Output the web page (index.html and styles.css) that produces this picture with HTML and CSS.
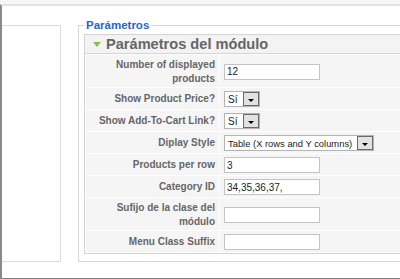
FILE: index.html
```html
<!DOCTYPE html>
<html lang="es">
  <head>
    <meta charset="UTF-8" />
    <meta name="viewport" content="width=device-width, initial-scale=1.0" />
    <title>Parámetros del módulo</title>
    <link rel="stylesheet" href="styles.css">
  </head>
  <body>
    <div class="topbar"></div>
    <div class="page">
      <div class="side"></div>
      <fieldset class="params">
        <legend>Parámetros</legend>
        <div class="pane">
          <h3 class="pane-title"><span class="arrow"></span>Parámetros del módulo</h3>
          <table class="paramlist">
            <tr>
              <td class="key">Number of displayed products</td>
              <td class="value"><input type="text" value="12" /></td>
            </tr>
            <tr>
              <td class="key">Show Product Price?</td>
              <td class="value">
                <span class="select"><span class="select-text">Sí</span><span class="select-btn"></span></span>
              </td>
            </tr>
            <tr>
              <td class="key">Show Add-To-Cart Link?</td>
              <td class="value">
                <span class="select"><span class="select-text">Sí</span><span class="select-btn"></span></span>
              </td>
            </tr>
            <tr>
              <td class="key">Diplay Style</td>
              <td class="value">
                <span class="select wide"><span class="select-text">Table (X rows and Y columns)</span><span class="select-btn"></span></span>
              </td>
            </tr>
            <tr>
              <td class="key">Products per row</td>
              <td class="value"><input type="text" value="3" /></td>
            </tr>
            <tr>
              <td class="key">Category ID</td>
              <td class="value"><input type="text" value="34,35,36,37," /></td>
            </tr>
            <tr>
              <td class="key">Sufijo de la clase del módulo</td>
              <td class="value"><input type="text" value="" /></td>
            </tr>
            <tr>
              <td class="key">Menu Class Suffix</td>
              <td class="value"><input type="text" value="" /></td>
            </tr>
          </table>
        </div>
      </fieldset>
    </div>
  </body>
</html>
```

FILE: styles.css
```css
* {
  box-sizing: border-box;
}
html,
body {
  margin: 0;
  padding: 0;
  overflow: hidden;
}
body {
  background: #fff;
  font-family: "Liberation Sans", Arial, sans-serif;
  width: 400px;
}
.topbar {
  height: 4px;
  background: #f6f6f6;
}
.page {
  display: flex;
  width: 440px;
  border-top: 2px solid #e2e2e2;
  border-left: 2px solid #8a8a8a;
  border-bottom: 2px solid #7e7e7e;
  padding: 12px 0 16px 0;
}
.side {
  width: 59px;
  margin-top: 7px;
  margin-right: 17px;
  border: 1px solid #dcdcdc;
  border-left: 0;
}
.params {
  flex: 1;
  margin: 0;
  padding: 1px 5px 7px 5px;
  border: 1px solid #d6d6d6;
  min-width: 0;
}
.params legend {
  padding: 0 2px;
  font-size: 11.5px;
  line-height: 15px;
  font-weight: bold;
  color: #1f66d4;
}
.pane {
  border: 1px solid #d4d4d4;
  background: #fff;
}
.pane-title {
  margin: 0;
  height: 19px;
  padding-left: 8px;
  display: flex;
  align-items: center;
  background: #f3f3f3;
  border-bottom: 1px solid #d4d4d4;
  font-size: 14.6px;
  line-height: 18px;
  color: #666;
}
.arrow {
  width: 0;
  height: 0;
  border-left: 4px solid transparent;
  border-right: 4px solid transparent;
  border-top: 5px solid #86bd4c;
  margin-right: 5px;
}
.paramlist {
  width: 100%;
  border-spacing: 1px;
}
.paramlist td {
  background: #f5f5f5;
  padding: 3px 4px 2px 4px;
  font-size: 10px;
  vertical-align: middle;
}
.paramlist .key {
  width: 133px;
  text-align: right;
  font-weight: bold;
  color: #666;
  line-height: 13.5px;
}
.paramlist input {
  display: block;
  width: 96px;
  height: 16px;
  margin: 0;
  padding: 0 2px;
  border: 1px solid #c4c4c4;
  background: #fff;
  font-family: "Liberation Sans", Arial, sans-serif;
  font-size: 10px;
  color: #222;
  outline: 0;
}
.select {
  display: flex;
  align-items: center;
  width: 36px;
  height: 16px;
  border: 1px solid #b4b4b4;
  background: #fff;
  color: #222;
}
.select.wide {
  width: 150px;
  font-size: 9.4px;
}
.select-text {
  flex: 1;
  padding-left: 3px;
  white-space: nowrap;
  overflow: hidden;
}
.select-btn {
  flex: none;
  width: 16px;
  height: 14px;
  border: 1px solid #6a6a6a;
  background: #e2e2e2;
  display: flex;
  align-items: flex-end;
  justify-content: center;
  padding-bottom: 3px;
}
.select-btn::after {
  content: "";
  border-left: 3px solid transparent;
  border-right: 3px solid transparent;
  border-top: 3px solid #000;
}
```
